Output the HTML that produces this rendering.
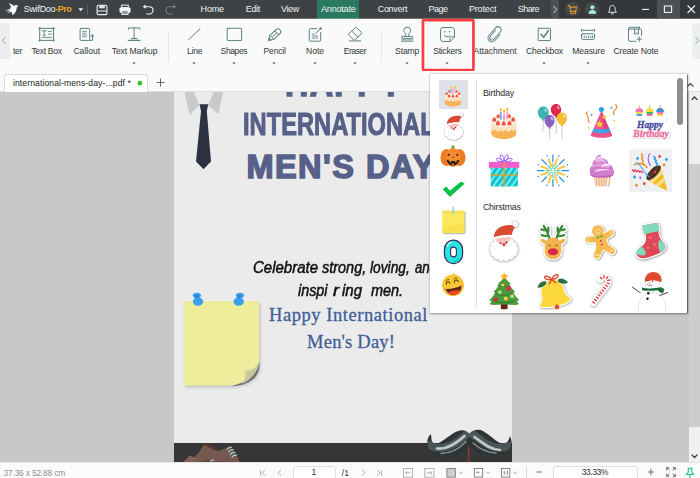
<!DOCTYPE html>
<html lang="en"><head><meta charset="utf-8"><title>SwifDoo PDF - Stickers</title>
<style>
html,body{margin:0;padding:0;background:#fff}
#app{position:relative;width:700px;height:478px;overflow:hidden;background:#fafafa;font-family:"Liberation Sans",sans-serif}
.t{position:absolute;white-space:pre;line-height:1}
.a{position:absolute}
svg{position:absolute;overflow:visible}
.ri{fill:none;stroke:#5d8283;stroke-width:1;stroke-linecap:round;stroke-linejoin:round}
</style></head><body>
<div id="app">

<div class="a" style="left:0;top:92px;width:700px;height:370px;background:#c8c8c8;overflow:hidden">
<div class="a" style="left:174px;top:0;width:338px;height:371px;background:#ebebeb"></div>
<svg style="left:0;top:-92px" width="700" height="478" viewBox="0 0 700 478"><polygon points="184.200,91 193.200,91 199.500,104.900 189.700,114.900" fill="#c9c9c9"/><polygon points="214.200,91 223.200,91 218.300,114.300 207.900,104.900" fill="#c9c9c9"/><path d="M199.600 104.200H208.200L206.800 111.200L211 161.400L203.500 169.200L196 161.400L201 111.200Z" fill="#2d3142"/></svg>
<span class="t" style="left:284.60px;top:-28.07px;font-size:38px;color:#566089;transform-origin:0 0;transform:scaleX(0.8517);font-weight:bold;letter-spacing:1.5px;-webkit-text-stroke:1.6px #566089;">HAPPY</span>
<span class="t" style="left:242.60px;top:16.72px;font-size:31.4px;color:#566089;transform-origin:0 0;transform:scaleX(0.7543);font-weight:bold;-webkit-text-stroke:1px #566089;">INTERNATIONAL</span>
<span class="t" style="left:246.40px;top:58.64px;font-size:32.5px;color:#566089;font-weight:bold;letter-spacing:1.478px;-webkit-text-stroke:1.5px #566089;">MEN&#x27;S DAY</span>
<span class="t" style="left:253.10px;top:167.86px;font-size:16px;color:#111;transform-origin:0 0;transform:scaleX(0.9369);font-style:italic;-webkit-text-stroke:0.5px #111;">Celebrate</span>
<span class="t" style="left:321.50px;top:167.86px;font-size:16px;color:#111;transform-origin:0 0;transform:scaleX(0.9035);font-style:italic;-webkit-text-stroke:0.5px #111;">strong,</span>
<span class="t" style="left:369.60px;top:167.86px;font-size:16px;color:#111;transform-origin:0 0;transform:scaleX(0.8605);font-style:italic;-webkit-text-stroke:0.5px #111;">loving,</span>
<span class="t" style="left:414.60px;top:167.86px;font-size:16px;color:#111;transform-origin:0 0;transform:scaleX(0.8201);font-style:italic;-webkit-text-stroke:0.5px #111;">and</span>
<span class="t" style="left:297.60px;top:191.06px;font-size:16px;color:#111;transform-origin:0 0;transform:scaleX(0.8965);font-style:italic;-webkit-text-stroke:0.5px #111;">inspi</span>
<span class="t" style="left:332.60px;top:191.06px;font-size:16px;color:#111;transform-origin:0 0;transform:scaleX(1.1449);font-style:italic;-webkit-text-stroke:0.5px #111;">r</span>
<span class="t" style="left:341.80px;top:191.06px;font-size:16px;color:#111;transform-origin:0 0;transform:scaleX(0.9410);font-style:italic;-webkit-text-stroke:0.5px #111;">ing</span>
<span class="t" style="left:370.90px;top:191.06px;font-size:16px;color:#111;transform-origin:0 0;transform:scaleX(0.9022);font-style:italic;-webkit-text-stroke:0.5px #111;">men.</span>
<span class="t" style="left:269.10px;top:213.98px;font-size:18.5px;color:#3f5f99;font-family:'Liberation Serif', serif;letter-spacing:0.549px;-webkit-text-stroke:0.3px #3f5f99;">Happy International</span>
<span class="t" style="left:307.10px;top:240.58px;font-size:18.5px;color:#3f5f99;font-family:'Liberation Serif', serif;letter-spacing:0.194px;-webkit-text-stroke:0.3px #3f5f99;">Men&#x27;s Day!</span>
<svg style="left:0;top:-92px" width="700" height="478" viewBox="0 0 700 478"><defs><linearGradient id="curl" x1="0" y1="0" x2="1" y2="1"><stop offset="0" stop-color="#dcdba6"/><stop offset="1" stop-color="#b4b49a"/></linearGradient><filter id="nsh" x="-10%" y="-10%" width="125%" height="125%"><feGaussianBlur stdDeviation="1.6"/></filter></defs><path d="M185 303.500H260.500V366C260 378 250 387 233 387.500H185Z" fill="#000" opacity=".16" filter="url(#nsh)"/><path d="M258.900 361C262 374 252 386 231 386.300C245 383 255 376 258.900 361Z" fill="#5e5e5e" opacity=".85"/><path d="M183.700 301.100H258.900V362C258.500 372 250 382 231 385.500H183.700Z" fill="#eeed9b"/><path d="M258.900 362C256.500 368 250.500 371.300 244.500 370.300C246.500 375 246 380 240.500 384.200C250 381 257 374 258.900 362Z" fill="url(#curl)"/><g fill="#3b9ff0"><ellipse cx="196.900" cy="295.300" rx="4.100" ry="2.600"/><path d="M195 295h4l.8 4h-5.200z" fill="#2f86d6"/><ellipse cx="198" cy="301.600" rx="5.200" ry="4.200"/><ellipse cx="240" cy="295.300" rx="4.100" ry="2.600"/><path d="M237.700 295h4l-.3 4h-5.200z" fill="#2f86d6"/><ellipse cx="238.700" cy="301.600" rx="5.200" ry="4.200"/></g></svg>
<div class="a" style="left:174px;top:350.7px;width:338px;height:30px;background:#363636"></div>
<svg style="left:0;top:-92px" width="700" height="478" viewBox="0 0 700 478"><path d="M183.500 462L189.400 455.600L194.500 457.200L199 452.500L203 462Z" fill="#7d6158"/><path d="M195.500 462L198.800 452.500L204.300 444.300C210 446.500 214 450 218 451C222 451 225 447.300 228.500 447C233.500 449 238 456 239.500 462Z" fill="#75594f"/><path d="M204.300 444.300L206.800 443.200C212 446 216.500 449 221 450.300L218 451.300C213 450.500 208 447.200 204.300 444.300Z" fill="#583630"/><path d="M200 462c3-1.500 8-2.500 14-1.500l20 1.500z" fill="#63463e"/><path d="M227.200 449.500c1-1.800 2.800-2.600 4.400-2.200M228.600 452c1-1.800 2.900-2.600 4.700-2.200M230.200 454.600c1-1.800 3-2.600 4.900-2.100M232 457.300c1-1.700 2.800-2.500 4.700-2" stroke="#9fcfd6" stroke-width="1.150" fill="none" stroke-linecap="round"/><path d="M210.500 462c.3-1.600 2-2.400 3.800-1.600" stroke="#9fcfd6" stroke-width="1.100" fill="none"/><rect x="467.900" y="445" width="1.500" height="17" fill="#8a3b2b"/><path id="mst" d="M469.300 433.800C466 430 462 429.500 458 431C450 434 443 442 437 443.500C433 444.500 431 441 431.500 437L430.700 434.300C427.500 437 426 443 428.500 448C432 455.500 442 458.500 450 457.300C458 456 465 451.500 469 445.700C473 451 481 455.500 490 455.700C499 456 507 453 510.500 447C512.500 443 511.500 438.500 509.700 436C509.500 440 507 443.500 503 443.500C497 443 490 435 483 431C479 428.800 473 429.500 469.300 433.800Z" fill="#2c3434"/><defs><filter id="mb" x="-10%" y="-30%" width="120%" height="160%"><feGaussianBlur stdDeviation="0.600"/></filter><clipPath id="mcl"><use href="#mst"/></clipPath></defs><g clip-path="url(#mcl)" filter="url(#mb)" fill="none" stroke-linecap="round"><path d="M430 445C440 452 455 446 467 434" stroke="#566262" stroke-width="8" opacity=".75"/><path d="M472 434C482 440 492 452 508 446" stroke="#566262" stroke-width="8" opacity=".75"/><path d="M437 448.500C447 450 456 443.500 464.500 436" stroke="#c6cfcf" stroke-width="2.700" opacity=".95"/><path d="M441 453.500C450 453.500 459 449 466 441.500" stroke="#93a0a0" stroke-width="1.600" opacity=".85"/><path d="M474.500 437C481 441.500 489 449.500 500 450" stroke="#c6cfcf" stroke-width="2.700" opacity=".95"/><path d="M473 443C479 448.500 487 452.500 496 453" stroke="#93a0a0" stroke-width="1.600" opacity=".85"/></g></svg>
</div>
<div class="a" style="left:0;top:0;width:700px;height:18px;background:#3e4245"></div>
<div class="a" style="left:0;top:18px;width:700px;height:1px;background:#6c6f72"></div>
<div class="a" style="left:317px;top:0;width:42px;height:18px;background:#2a7a62"></div>
<div class="a" style="left:317px;top:18px;width:42px;height:1px;background:#5f9a88"></div>
<div class="a" style="left:559px;top:0;width:141px;height:18px;background:#35383b"></div>
<div class="a" style="left:559px;top:18px;width:141px;height:1px;background:#65686a"></div>
<div class="a" style="left:551px;top:0;width:8px;height:18px;background:#4e5255"></div>
<div class="a" style="left:657.4px;top:0;width:22.6px;height:18px;background:#4c5053"></div>
<svg style="left:0px;top:0px" width="30" height="19" viewBox="0 0 30 19"><defs><linearGradient id="bg" x1="4" y1="0" x2="11" y2="0" gradientUnits="userSpaceOnUse"><stop offset="0" stop-color="#fff" stop-opacity=".15"/><stop offset="1" stop-color="#fff"/></linearGradient></defs><path d="M8.6 3.200C10.600 3.300 12.600 4.500 13.700 6.100C14.700 5.100 16.200 4.800 17.300 5.300L18.100 6.500L16.900 6.900C16.700 9.200 15.900 11.600 14.600 13.200C13.800 14.200 12.900 14.900 11.900 15.100C12.400 13.700 12.200 12.500 11.600 11.700C10.400 12.400 8.400 12.900 5.100 12.800C7.400 12.300 9 11.700 10 10.900C8.500 11 6.500 10.900 4.300 10.400C7 10 9.200 9.300 10.600 8.300C11.200 6.500 10.400 4.600 8.600 3.200Z" fill="url(#bg)"/></svg>
<svg style="left:78px;top:8px" width="6" height="4" viewBox="0 0 6 4"><path d="M0.3 0.3h5L2.8 3.3z" fill="#f0f0f0"/></svg>
<div class="a" style="left:87px;top:5px;width:1px;height:9.5px;background:#5c6063"></div>
<svg style="left:96px;top:4px" width="12" height="12" viewBox="0 0 12 12"><rect x="1.1" y="1.3" width="9.8" height="9.3" rx="1.3" fill="none" stroke="#f4f4f4" stroke-width="1.1"/><rect x="3.2" y="1.4" width="5.6" height="2.9" fill="#f4f4f4" opacity=".9"/><path d="M1.2 7h9.6" stroke="#f4f4f4" stroke-width="1"/></svg>
<svg style="left:119px;top:4px" width="12" height="12" viewBox="0 0 12 12"><rect x="2.7" y="1.1" width="6.6" height="2.6" fill="none" stroke="#f4f4f4" stroke-width="1"/><rect x="0.5" y="3.6" width="11" height="5.2" rx="1" fill="#f4f4f4"/><rect x="2.9" y="6.6" width="6.2" height="3.9" fill="#8f9395" stroke="#f4f4f4" stroke-width="0.9"/></svg>
<svg style="left:142px;top:3px" width="13" height="13" viewBox="0 0 13 13"><path d="M2.6 3.7H7.4A3.65 3.65 0 0 1 7.4 11H4.2" fill="none" stroke="#f4f4f4" stroke-width="1.15"/><path d="M0.7 3.7L3.6 1.6V5.800z" fill="#f4f4f4"/></svg>
<svg style="left:164px;top:3px" width="13" height="13" viewBox="0 0 13 13"><path d="M10.4 3.7H5.600A3.65 3.65 0 0 0 5.600 11H8.800" fill="none" stroke="#777b7e" stroke-width="1.15"/><path d="M12.3 3.7L9.4 1.6V5.800z" fill="#777b7e"/></svg>
<svg style="left:552px;top:5px" width="6" height="9" viewBox="0 0 6 9"><path d="M1.5 1L4.800 4.500L1.5 8" fill="none" stroke="#d8d8d8" stroke-width="1"/></svg>
<div class="a" style="left:565px;top:1.6px;width:14.8px;height:14.8px;border-radius:50%;background:#46494c"></div>
<svg style="left:565px;top:2px" width="15" height="15" viewBox="0 0 15 15"><path d="M2.8 3.600h1.7l1.2 5.800h5.000l.8-4.300H5.300" fill="none" stroke="#dc9a22" stroke-width="1.1" stroke-linejoin="round"/><path d="M5.800 9.400v2.200M10.400 9.400v2.200M5.800 11.600h4.600" fill="none" stroke="#dc9a22" stroke-width="1"/></svg>
<div class="a" style="left:584.6px;top:1.6px;width:14.8px;height:14.8px;border-radius:50%;background:#46494c"></div>
<svg style="left:584.6px;top:1.6px" width="15" height="15" viewBox="0 0 15 15"><circle cx="7.4" cy="5.300" r="2.100" fill="#a9eddb"/><path d="M3.600 11.800c0-2.500 1.600-3.700 3.800-3.700s3.800 1.200 3.800 3.700z" fill="#a9eddb"/></svg>
<svg style="left:606px;top:3px" width="13" height="13" viewBox="0 0 13 13"><path d="M2.300 9.300c1-.9 1.300-2 1.300-3.600 0-1.900 1.100-3.200 2.800-3.200s2.800 1.300 2.800 3.200c0 1.600.3 2.700 1.300 3.600z" fill="none" stroke="#e6e6e6" stroke-width="1"/><path d="M5.300 10.900h2.200" stroke="#e6e6e6" stroke-width="1.1"/></svg>
<svg style="left:641px;top:5px" width="10" height="9" viewBox="0 0 10 9"><path d="M1 4.400h7" stroke="#f4f4f4" stroke-width="1.1"/></svg>
<svg style="left:663px;top:4px" width="10" height="10" viewBox="0 0 10 10"><rect x="1.400" y="2" width="7.200" height="6.400" fill="none" stroke="#f4f4f4" stroke-width="1.1"/></svg>
<svg style="left:686px;top:4px" width="11" height="11" viewBox="0 0 11 11"><path d="M1.600 1.500L9 9M9 1.500L1.600 9" stroke="#f4f4f4" stroke-width="1.1" fill="none"/></svg>
<span class="t" style="left:23.80px;top:5.23px;font-size:9px;color:#f2f2f2;letter-spacing:-0.288px;">SwifDoo</span>
<span class="t" style="left:55.30px;top:5.23px;font-size:9px;color:#eaa327;font-weight:bold;letter-spacing:-0.475px;">-Pro</span>
<span class="t" style="left:200.60px;top:4.68px;font-size:9px;color:#f2f2f2;letter-spacing:-0.204px;">Home</span>
<span class="t" style="left:245.70px;top:4.68px;font-size:9px;color:#f2f2f2;letter-spacing:-0.304px;">Edit</span>
<span class="t" style="left:280.90px;top:4.68px;font-size:9px;color:#f2f2f2;letter-spacing:-0.340px;">View</span>
<span class="t" style="left:321.00px;top:4.68px;font-size:9px;color:#f2f2f2;letter-spacing:-0.191px;">Annotate</span>
<span class="t" style="left:377.70px;top:4.68px;font-size:9px;color:#f2f2f2;letter-spacing:-0.288px;">Convert</span>
<span class="t" style="left:428.60px;top:4.68px;font-size:9px;color:#f2f2f2;letter-spacing:-0.533px;">Page</span>
<span class="t" style="left:468.90px;top:4.68px;font-size:9px;color:#f2f2f2;letter-spacing:-0.145px;">Protect</span>
<span class="t" style="left:517.80px;top:4.68px;font-size:9px;color:#f2f2f2;letter-spacing:-0.586px;">Share</span>
<div class="a" style="left:0;top:19px;width:700px;height:52px;background:#fafafa"></div>
<div class="a" style="left:0;top:23px;width:10px;height:36px;background:#eceeef;border-radius:0 2px 2px 0"></div>
<div class="a" style="left:691.5px;top:23px;width:9px;height:36px;background:#eceeef;border-radius:2px 0 0 2px"></div>
<div class="a" style="left:168px;top:32px;width:1px;height:30px;background:#e3e5e6"></div>
<div class="a" style="left:381px;top:32px;width:1px;height:30px;background:#e3e5e6"></div>
<svg style="left:1px;top:36px" width="6" height="9" viewBox="0 0 6 9"><path d="M4.500 1L1.300 4.500L4.500 8" fill="none" stroke="#8aa3a3" stroke-width="1"/></svg>
<svg style="left:694px;top:36px" width="6" height="9" viewBox="0 0 6 9"><path d="M1.500 1L4.700 4.500L1.500 8" fill="none" stroke="#8aa3a3" stroke-width="1"/></svg>
<svg class="ri" style="left:30px;top:20px" width="70" height="30" viewBox="30 20 70 30"><rect x="39.700" y="28.400" width="13.800" height="12" rx="0.600"/><g fill="#5d8283" stroke="none"><circle cx="39.700" cy="28.400" r="1.150"/><circle cx="53.500" cy="28.400" r="1.150"/><circle cx="39.700" cy="40.400" r="1.150"/><circle cx="53.500" cy="40.400" r="1.150"/></g><path d="M42.100 30.800h4.200M44.200 30.800v4.400M43.100 35.200h2.300M48.300 31.400h3.200M48.300 34.100h3.200M42.100 37.400h9.400" stroke-width="0.900"/><rect x="80.100" y="28.400" width="9.600" height="12" rx="0.900"/><path d="M82.400 31.400h4M82.400 33.200h4M82.400 35h4M82.400 36.800h4" stroke-width="0.800"/><path d="M89.700 40.400h2.800v-5"/><path d="M91.300 36l1.200-1.700l1.200 1.700z" fill="#5d8283" stroke-width="0.600"/></svg>
<svg class="ri" style="left:120px;top:20px" width="30" height="30" viewBox="120 20 30 30"><path d="M128.500 29.400V27.900H139.700V29.400M134.100 27.900V38.500M131.400 38.500h5.500"/><path d="M128.300 40.400H139.800" stroke-width="1.250"/></svg>
<svg class="ri" style="left:187px;top:27px" width="15" height="15" viewBox="0 0 15 15"><path d="M1.500 12.700L13 1.900"/></svg>
<svg class="ri" style="left:226px;top:27px" width="17" height="15" viewBox="0 0 17 15"><rect x="1.200" y="1.300" width="14.400" height="12.300" rx="0.5"/></svg>
<svg class="ri" style="left:260px;top:20px" width="30" height="30" viewBox="260 20 30 30"><g transform="translate(268.400 40.500) rotate(-43)"><path d="M0.300 0L4.300 -2.800H13A2.800 2.800 0 0 1 13 2.800H4.300Z"/><path d="M11.300 -2.800V2.800M6 0H11.300" stroke-width="0.900"/><path d="M4.300 -2.800C5.300 -1 5.300 1 4.300 2.800" stroke-width="0.900"/><path d="M0.200 0L2.300 -1.500V1.500Z" fill="#5d8283" stroke-width="0.500"/></g></svg>
<svg class="ri" style="left:300px;top:20px" width="70" height="30" viewBox="300 20 70 30"><path d="M316.800 28.600H310.200A0.900 0.900 0 0 0 309.300 29.500V40.300A0.900 0.900 0 0 0 310.200 41.200H319.800A0.900 0.900 0 0 0 320.700 40.300V32.400"/><path d="M312.200 34.100h2.600M312.200 36.100h5.400M312.200 38.100h5.400" stroke-width="0.850"/><path d="M315.900 33.200L320.200 28.900"/><circle cx="320.600" cy="28.600" r="1.250" fill="#5d8283" stroke="none"/><path d="M355.300 27.700a1 1 0 0 1 1.400 0L361.300 32.300a1 1 0 0 1 0 1.400L355.200 39.800a1 1 0 0 1-1.400 0L348.700 35.200a1 1 0 0 1 0-1.400Z"/><path d="M351.900 31.200L357.900 37.100M349.300 40.900H360.600"/></svg>
<svg class="ri" style="left:395px;top:20px" width="30" height="30" viewBox="395 20 30 30"><path d="M405.700 36.200V33.700C404.500 32.700 403.900 31.700 403.900 30.500A3.350 3.350 0 0 1 410.600 30.500C410.600 31.700 410 32.700 408.800 33.700V36.200"/><rect x="401.700" y="36.400" width="11.100" height="2" rx="0.500"/><path d="M401.500 39.900H413M401.500 41.300H413" stroke-width="0.850"/></svg>
<svg class="ri" style="left:439px;top:26px" width="17" height="17" viewBox="0 0 17 17"><path d="M10.800 15.500H4.200A2.700 2.700 0 0 1 1.500 12.800V4.200A2.700 2.700 0 0 1 4.200 1.500H12.800A2.700 2.700 0 0 1 15.500 4.200V10.800Z"/><path d="M10.800 15.500V12.400A1.600 1.600 0 0 1 12.400 10.800H15.500"/><path d="M5.300 9.400C6.800 11 9.400 11.200 11 9.800"/><circle cx="6" cy="5.800" r="0.800" fill="#5d8283" stroke="none"/><circle cx="10.600" cy="5.800" r="0.800" fill="#5d8283" stroke="none"/></svg>
<svg class="ri" style="left:486px;top:26px" width="17" height="18" viewBox="0 0 17 18"><g transform="rotate(42 8.500 9)"><path d="M6.200 5.500V13.200A2.300 2.300 0 0 0 10.800 13.200V3.400A3.100 3.100 0 0 0 4.600 3.400V13.400A3.900 3.900 0 0 0 12.400 13.400V5.500" transform="translate(0 -0.500)"/></g></svg>
<svg class="ri" style="left:537px;top:27px" width="15" height="15" viewBox="0 0 15 15"><rect x="1.200" y="1.300" width="12.300" height="12.300" rx="0.600"/><path d="M4 7.300L6.600 10.200L11.300 3.800" stroke-width="1.500"/></svg>
<svg class="ri" style="left:580px;top:28px" width="16" height="13" viewBox="0 0 16 13"><path d="M1.600 1.300V3.300M14.400 1.300V3.300M1.600 2.300H14.400"/><rect x="1.500" y="5.800" width="13" height="5.600" rx="1"/><path d="M4.200 8V9.600M6.400 8.600V9.600M8.600 8V9.600M10.800 8.600V9.600M12.600 8V9.600"/></svg>
<svg class="ri" style="left:620px;top:20px" width="30" height="30" viewBox="620 20 30 30"><path d="M639.300 27.300H630A1.500 1.500 0 0 0 628.500 28.800V39.800A1.500 1.500 0 0 0 630 41.300H635.800"/><path d="M628.700 29.100H640.400A1.200 1.200 0 0 1 641.600 30.300V35.500M639.300 27.300V29"/><path d="M634.600 29.200V34.400L636.450 33L638.300 34.400V29.200"/><path d="M637 39.100H641.600M639.300 36.800V41.400"/></svg>
<span class="t" style="left:12.90px;top:47.32px;font-size:8.6px;color:#33373a;letter-spacing:-0.310px;">ter</span>
<span class="t" style="left:31.40px;top:47.32px;font-size:8.6px;color:#33373a;letter-spacing:-0.334px;">Text Box</span>
<span class="t" style="left:73.40px;top:47.32px;font-size:8.6px;color:#33373a;letter-spacing:0.019px;">Callout</span>
<span class="t" style="left:111.70px;top:47.32px;font-size:8.6px;color:#33373a;letter-spacing:-0.092px;">Text Markup</span>
<span class="t" style="left:187.00px;top:47.32px;font-size:8.6px;color:#33373a;letter-spacing:-0.212px;">Line</span>
<span class="t" style="left:220.60px;top:47.32px;font-size:8.6px;color:#33373a;letter-spacing:-0.426px;">Shapes</span>
<span class="t" style="left:263.50px;top:47.32px;font-size:8.6px;color:#33373a;letter-spacing:-0.184px;">Pencil</span>
<span class="t" style="left:306.00px;top:47.32px;font-size:8.6px;color:#33373a;letter-spacing:-0.039px;">Note</span>
<span class="t" style="left:343.70px;top:47.32px;font-size:8.6px;color:#33373a;letter-spacing:-0.502px;">Eraser</span>
<span class="t" style="left:395.10px;top:47.32px;font-size:8.6px;color:#33373a;letter-spacing:-0.169px;">Stamp</span>
<span class="t" style="left:433.20px;top:47.32px;font-size:8.6px;color:#33373a;letter-spacing:-0.283px;">Stickers</span>
<span class="t" style="left:473.50px;top:47.32px;font-size:8.6px;color:#33373a;letter-spacing:-0.037px;">Attachment</span>
<span class="t" style="left:526.00px;top:47.32px;font-size:8.6px;color:#33373a;letter-spacing:-0.165px;">Checkbox</span>
<span class="t" style="left:572.30px;top:47.32px;font-size:8.6px;color:#33373a;letter-spacing:-0.120px;">Measure</span>
<span class="t" style="left:613.40px;top:47.32px;font-size:8.6px;color:#33373a;letter-spacing:-0.122px;">Create Note</span>
<svg style="left:132.0px;top:61.8px" width="4" height="3" viewBox="0 0 4 3"><path d="M0.350 0.400h3.300L2 2.350z" fill="#4a4e51"/></svg>
<svg style="left:192.0px;top:61.8px" width="4" height="3" viewBox="0 0 4 3"><path d="M0.350 0.400h3.300L2 2.350z" fill="#4a4e51"/></svg>
<svg style="left:232.3px;top:61.8px" width="4" height="3" viewBox="0 0 4 3"><path d="M0.350 0.400h3.300L2 2.350z" fill="#4a4e51"/></svg>
<svg style="left:272.3px;top:61.8px" width="4" height="3" viewBox="0 0 4 3"><path d="M0.350 0.400h3.300L2 2.350z" fill="#4a4e51"/></svg>
<svg style="left:313.0px;top:61.8px" width="4" height="3" viewBox="0 0 4 3"><path d="M0.350 0.400h3.300L2 2.350z" fill="#4a4e51"/></svg>
<svg style="left:352.9px;top:61.8px" width="4" height="3" viewBox="0 0 4 3"><path d="M0.350 0.400h3.300L2 2.350z" fill="#4a4e51"/></svg>
<svg style="left:405.0px;top:61.8px" width="4" height="3" viewBox="0 0 4 3"><path d="M0.350 0.400h3.300L2 2.350z" fill="#4a4e51"/></svg>
<svg style="left:445.4px;top:61.8px" width="4" height="3" viewBox="0 0 4 3"><path d="M0.350 0.400h3.300L2 2.350z" fill="#4a4e51"/></svg>
<svg style="left:542.0px;top:61.8px" width="4" height="3" viewBox="0 0 4 3"><path d="M0.350 0.400h3.300L2 2.350z" fill="#4a4e51"/></svg>
<svg style="left:585.7px;top:61.8px" width="4" height="3" viewBox="0 0 4 3"><path d="M0.350 0.400h3.300L2 2.350z" fill="#4a4e51"/></svg>
<svg style="left:0;top:0" width="700" height="80" viewBox="0 0 700 80"><rect x="422.950" y="20.050" width="50.500" height="50" rx="0.800" fill="#fcfcfc" fill-opacity="0" stroke="#f73e42" stroke-width="2.700"/></svg>
<div class="a" style="left:0;top:71px;width:700px;height:20px;background:#fafafa"></div>
<div class="a" style="left:0;top:91px;width:700px;height:1px;background:#dcdedf"></div>
<div class="a" style="left:4.3px;top:74px;width:143.6px;height:18px;background:#fff;border:1px solid #d9dcde;border-bottom:none;border-radius:3px 3px 0 0;box-sizing:border-box"></div>
<span class="t" style="left:13.00px;top:78.52px;font-size:8.6px;color:#222;letter-spacing:0.093px;">international-mens-day-...pdf *</span>
<svg style="left:136px;top:79px" width="8" height="8" viewBox="0 0 8 8"><circle cx="3.900" cy="4.200" r="2.350" fill="#34c724"/></svg>
<svg style="left:156px;top:78px" width="9" height="9" viewBox="0 0 9 9"><path d="M4.5 0.5v8M0.5 4.5h8" stroke="#555" stroke-width="0.9" fill="none"/></svg>
<svg style="left:686px;top:82px" width="9" height="6" viewBox="0 0 9 6"><path d="M1.300 4.700L4.400 1.600L7.500 4.700" stroke="#3c3c3c" stroke-width="1.150" fill="none"/></svg>
<div class="a" style="left:688.5px;top:92px;width:11.5px;height:370px;background:#f0f0f0"></div>
<div class="a" style="left:688.5px;top:164px;width:11.5px;height:263px;background:#cdcdcd"></div>
<svg style="left:690px;top:95px" width="9" height="6" viewBox="0 0 9 6"><path d="M1.600 4.900L4.500 2L7.400 4.900" stroke="#333" stroke-width="1.250" fill="none"/></svg>
<svg style="left:690px;top:453px" width="9" height="6" viewBox="0 0 9 6"><path d="M1.600 1.600L4.500 4.500L7.400 1.600" stroke="#333" stroke-width="1.250" fill="none"/></svg>
<div class="a" style="left:430px;top:74.4px;width:257px;height:239px;background:#fff;box-shadow:0.5px 0.8px 2.2px rgba(0,0,0,.42);border-radius:1px"></div>
<div class="a" style="left:686.6px;top:75px;width:1px;height:238px;background:rgba(70,70,70,.55)"></div>
<div class="a" style="left:439px;top:80.4px;width:28.6px;height:28.2px;background:#dfe3e7"></div>
<div class="a" style="left:476.4px;top:80px;width:1px;height:227px;background:#dcdfe1"></div>
<div class="a" style="left:677.2px;top:78.2px;width:5.8px;height:46.5px;border-radius:3px;background:#8e8e8e"></div>
<span class="t" style="left:482.90px;top:88.65px;font-size:8.8px;color:#2b2b2b;letter-spacing:-0.148px;">Birthday</span>
<span class="t" style="left:482.90px;top:203.25px;font-size:8.8px;color:#2b2b2b;letter-spacing:-0.199px;">Chirstmas</span>
<svg style="left:0;top:0" width="700" height="478" viewBox="0 0 700 478">
<defs><filter id="sblur" x="-20%" y="-20%" width="140%" height="140%"><feGaussianBlur stdDeviation="0.800"/></filter><clipPath id="pclip"><rect x="430" y="75" width="257" height="235.300"/></clipPath></defs>
<g clip-path="url(#pclip)">
<rect x="629" y="149.300" width="43" height="42.600" fill="#eef0f2"/>
<g transform="translate(453 96.2) scale(0.66)">
<ellipse cx="0" cy="10" rx="12.400" ry="5.800" fill="#f6b257"/>
<path d="M-12.400 4V10H12.400V4Z" fill="#f6b257"/>
<path d="M-12.600 -2V5C-11 8 -9.500 8 -8.500 5.500C-7 9 -4.500 9 -3.500 6C-2 9 1 9 2 6C3.500 9 6.500 9 7.500 5.500C8.500 8 11 8 12.600 5V-2Z" fill="#fbe2c0"/>
<ellipse cx="0" cy="-2" rx="12.600" ry="5.600" fill="#fdeedb"/>
<g fill="#f0524b"><path d="M-9.500 -6.500c1.600 1.200 2.200 3 1.600 4.400h-3.400c-.6-1.600 0-3.300 1.800-4.400z"/><path d="M9.500 -6.500c1.600 1.200 2.200 3 1.600 4.400h-3.400c-.6-1.600 0-3.300 1.800-4.400z"/>
<path d="M-5.600 -9.500c1.400 1 1.900 2.600 1.400 3.800h-3c-.5-1.400 0-2.800 1.600-3.800z"/><path d="M5.600 -9.500c1.400 1 1.900 2.600 1.400 3.800h-3c-.5-1.400 0-2.800 1.600-3.800z"/>
<path d="M-5.800 -3c1.700 1.300 2.300 3.200 1.700 4.700h-3.600c-.6-1.700 0-3.500 1.900-4.700z"/><path d="M0 -2.600c1.700 1.300 2.300 3.200 1.700 4.700h-3.600c-.6-1.700 0-3.500 1.900-4.700z"/><path d="M5.800 -3c1.700 1.300 2.300 3.200 1.700 4.700h-3.600c-.6-1.700 0-3.500 1.900-4.700z"/></g>
<rect x="-3.900" y="-11.500" width="1.700" height="7.500" fill="#6ea6e6"/><rect x="-0.600" y="-10" width="1.700" height="7" fill="#ef8fc4"/><rect x="2.500" y="-12" width="1.700" height="7.500" fill="#f3a0c8"/>
<g fill="#fbc02d"><path d="M-3 -16c1.300 1.500 1.600 3 0 4.500c-1.600-1.500-1.300-3 0-4.500z"/><path d="M.3 -14.800c1.300 1.500 1.600 3 0 4.500c-1.600-1.500-1.300-3 0-4.500z"/><path d="M3.400 -16.500c1.300 1.500 1.600 3 0 4.500c-1.600-1.500-1.300-3 0-4.500z"/></g>
</g>
<g transform="translate(453.5 126.5) scale(0.68)">
<g fill="#000" stroke="#000" stroke-width="1.200" opacity=".32" transform="translate(.2 .4)" filter="url(#sblur)"><ellipse cx="0.3" cy="8.3" rx="11.799999999999999" ry="9.6"/><circle cx="11.50" cy="8.30" r="3"/><circle cx="10.39" cy="12.20" r="3"/><circle cx="7.28" cy="15.34" r="3"/><circle cx="2.79" cy="17.07" r="3"/><circle cx="-2.19" cy="17.07" r="3"/><circle cx="-6.68" cy="15.34" r="3"/><circle cx="-9.79" cy="12.20" r="3"/><circle cx="-10.90" cy="8.30" r="3"/><circle cx="-9.79" cy="4.40" r="3"/><circle cx="-6.68" cy="1.26" r="3"/><circle cx="-2.19" cy="-0.47" r="3"/><circle cx="2.79" cy="-0.47" r="3"/><circle cx="7.28" cy="1.26" r="3"/><circle cx="10.39" cy="4.40" r="3"/><circle cx="11.700" cy="-16.800" r="2.700"/></g>
<g fill="#fff"><ellipse cx="0.3" cy="8.3" rx="11.799999999999999" ry="9.6"/><circle cx="11.50" cy="8.30" r="3"/><circle cx="10.39" cy="12.20" r="3"/><circle cx="7.28" cy="15.34" r="3"/><circle cx="2.79" cy="17.07" r="3"/><circle cx="-2.19" cy="17.07" r="3"/><circle cx="-6.68" cy="15.34" r="3"/><circle cx="-9.79" cy="12.20" r="3"/><circle cx="-10.90" cy="8.30" r="3"/><circle cx="-9.79" cy="4.40" r="3"/><circle cx="-6.68" cy="1.26" r="3"/><circle cx="-2.19" cy="-0.47" r="3"/><circle cx="2.79" cy="-0.47" r="3"/><circle cx="7.28" cy="1.26" r="3"/><circle cx="10.39" cy="4.40" r="3"/></g>
<path d="M-8 -2.300C-5 -3.400 3 -4.800 7.800 -4.400C7.200 -2 6 0.500 4 2.800L0.500 4.500L-3.500 3.500C-5.500 2.500 -7.200 0 -8 -2.300Z" fill="#f9c4bd"/>
<path d="M-9.700 -3.200C-9.600 -9 -6 -13.500 -0.500 -15C3.500 -16 7.500 -16.300 10.300 -15.200L11.500 -14C10 -12 8.800 -9 8.300 -5.300C2.500 -5.800 -4 -5 -9.700 -3.200Z" fill="#d84a32"/>
<path d="M-10.300 -3.400C-4 -5.800 3 -6.500 8.700 -6L8.500 -3.700C3 -4.300 -4 -3.500 -9.800 -1.200Z" fill="#fff"/>
<circle cx="11.700" cy="-16.800" r="2.600" fill="#fff"/>
<circle cx="-3" cy="2.200" r="0.800" fill="#1c1c1c"/><circle cx="2.900" cy="1.400" r="0.800" fill="#1c1c1c"/>
<circle cx="0.500" cy="3.800" r="1.700" fill="#e0453a"/>
<path d="M-9 1.500C-6 1.500 -2 3 -0.500 5.200H1.500C3 2.800 6 1 9 0.500C8 5 3.500 7 0.500 6C-2.500 7.500 -7.500 6 -9 1.500Z" fill="#fff"/>
</g>
<g transform="translate(453 157)">
<rect x="-1.300" y="-11.500" width="2.600" height="4.500" rx="0.800" fill="#5aa02c"/>
<ellipse cx="-6.500" cy="0.500" rx="6" ry="8.600" fill="#ee7a22"/><ellipse cx="6.500" cy="0.500" rx="6" ry="8.600" fill="#ee7a22"/>
<ellipse cx="0" cy="0.500" rx="7.500" ry="9.600" fill="#f58a2e"/>
<path d="M-5.800 -1.500l1.500-2.200l1.500 2.200z M2.800 -1.500l1.500-2.200l1.500 2.200z M-0.800 1l.8-1.200l.8 1.200z" fill="#2a1c14"/>
<path d="M-6.500 2.500c2 1 4 1.500 6.500 1.500s4.500-.5 6.500-1.500c-.5 3.500-3 6-6.500 6s-6-2.500-6.500-6z M-3.500 3.600v1.600h1.600V3.900z M2 3.900v1.400h1.600V3.600z M-1 8v-1.400h1.800V8z" fill="#2a1c14" fill-rule="evenodd"/>
</g>
<g transform="translate(453.5 188.8)">
<path d="M-11.500 0.500L-7.500 -3.500L-3.500 1L8 -8.500L12 -5L-3.500 9Z" fill="#000" opacity=".12" transform="translate(.6 .8)"/>
<path d="M-11.500 0.500L-7.500 -3.500L-3.500 1L8 -8.500L12 -5L-3.500 9Z" fill="#0dc04b" stroke="#fff" stroke-width="1.200" stroke-linejoin="round"/>
</g>
<g transform="translate(453.2 221.7)">
<path d="M-10.500 -10.800H11.800V9.500L10.500 11.800H-10.500Z" fill="#000" opacity=".25" transform="translate(.7 .8)"/>
<path d="M-11 -11.300H11.300V9L9.800 11.300H-11Z" fill="#fbe85c"/>
<path d="M-11 6L11.300 2V9L9.800 11.300H-11Z" fill="#f7de4a" opacity=".7"/>
<path d="M-10.500 -9.700H11" stroke="#b9a93a" stroke-width="0.600" stroke-dasharray="0.800 0.800"/>
<rect x="-0.800" y="-14.800" width="1.800" height="6.500" fill="#9fd2ee"/>
</g>
<g transform="translate(453.5 251.8)">
<rect x="-9.100" y="-11.600" width="18.200" height="23.400" rx="8.800" ry="9.500" fill="#22e6df" stroke="#3c2c5c" stroke-width="1.200"/>
<rect x="-2.900" y="-4.700" width="5.800" height="9.800" rx="2.800" fill="#fff" stroke="#3c2c5c" stroke-width="1.100"/>
<path d="M-6 -5.500C-5.500 -8 -4 -9.300 -2 -9.600" stroke="#c8fbfb" stroke-width="1.300" fill="none" stroke-linecap="round"/>
<path d="M5.500 6.500C4.500 8.500 3 9.500 1 9.800" stroke="#12b8c0" stroke-width="1.200" fill="none" stroke-linecap="round"/>
</g>
<g transform="translate(453 285)">
<circle cx="0" cy="0.300" r="10.800" fill="#f7b52a"/><circle cx="0" cy="-0.600" r="10" fill="#fcc934"/>
<path d="M-0.500 -10.500c.4-1.600 2.400-1.500 2.600.2z" fill="#f9bd2c"/>
<g transform="rotate(-12)">
<path d="M-6.600 -1.800c.3-3.300 3.700-3.300 4.100-.2M1.800 -1.800c.3-3.300 3.700-3.300 4.100-.2" stroke="#5a3a10" stroke-width="1" fill="none" stroke-linecap="round"/>
<path d="M-6.300 -5.500c1-1 2.500-1.200 3.600-.5M2 -5.800c1-.8 2.500-.8 3.600 0" stroke="#5a3a10" stroke-width="0.800" fill="none" stroke-linecap="round"/>
<path d="M-8 2.300C-3 3.600 3 3.600 8 2.300C7.600 7 4 9.800 0 9.800C-4 9.800 -7.600 7 -8 2.300Z" fill="#5a2a16"/>
<path d="M-6.200 6.300C-3 5.300 2 5.300 5.800 6.800C4.500 8.700 2.300 9.800 0 9.800C-2.600 9.800 -4.900 8.500 -6.200 6.300Z" fill="#ee452c"/>
<circle cx="-9" cy="2.500" r="1.300" fill="#f59a3a" opacity=".7"/><circle cx="9" cy="2.500" r="1.300" fill="#f59a3a" opacity=".7"/>
</g>
</g>
<g transform="translate(503.8 123.5) scale(1.0)">
<ellipse cx="0" cy="10" rx="12.400" ry="5.800" fill="#f6b257"/>
<path d="M-12.400 4V10H12.400V4Z" fill="#f6b257"/>
<path d="M-12.600 -2V5C-11 8 -9.500 8 -8.500 5.500C-7 9 -4.500 9 -3.500 6C-2 9 1 9 2 6C3.500 9 6.500 9 7.500 5.500C8.500 8 11 8 12.600 5V-2Z" fill="#fbe2c0"/>
<ellipse cx="0" cy="-2" rx="12.600" ry="5.600" fill="#fdeedb"/>
<g fill="#f0524b"><path d="M-9.500 -6.500c1.600 1.200 2.200 3 1.600 4.400h-3.400c-.6-1.600 0-3.300 1.800-4.400z"/><path d="M9.500 -6.500c1.600 1.200 2.200 3 1.600 4.400h-3.400c-.6-1.600 0-3.300 1.800-4.400z"/>
<path d="M-5.600 -9.500c1.400 1 1.900 2.600 1.400 3.800h-3c-.5-1.400 0-2.800 1.600-3.800z"/><path d="M5.600 -9.500c1.400 1 1.900 2.600 1.400 3.800h-3c-.5-1.400 0-2.800 1.600-3.800z"/>
<path d="M-5.800 -3c1.700 1.300 2.300 3.200 1.700 4.700h-3.600c-.6-1.700 0-3.500 1.900-4.700z"/><path d="M0 -2.600c1.700 1.300 2.300 3.200 1.700 4.700h-3.600c-.6-1.700 0-3.500 1.900-4.700z"/><path d="M5.800 -3c1.700 1.300 2.300 3.200 1.700 4.700h-3.600c-.6-1.700 0-3.500 1.900-4.700z"/></g>
<rect x="-3.900" y="-11.500" width="1.700" height="7.500" fill="#6ea6e6"/><rect x="-0.600" y="-10" width="1.700" height="7" fill="#ef8fc4"/><rect x="2.500" y="-12" width="1.700" height="7.500" fill="#f3a0c8"/>
<g fill="#fbc02d"><path d="M-3 -16c1.300 1.500 1.600 3 0 4.500c-1.600-1.500-1.300-3 0-4.500z"/><path d="M.3 -14.800c1.300 1.500 1.600 3 0 4.500c-1.600-1.500-1.300-3 0-4.500z"/><path d="M3.400 -16.500c1.300 1.500 1.600 3 0 4.500c-1.600-1.500-1.300-3 0-4.500z"/></g>
</g>
<g>
<g stroke="#b7b2cf" stroke-width="0.700" fill="none"><path d="M543.300 119.500c-1 3 .8 5-.2 8s.3 3 0 4.500"/><path d="M556 116.200c1 4-.8 6 .2 9.500s-.5 5 0 8"/><path d="M549.600 127.200c1 3-.8 5 0 8s-.3 2.500 0 4"/><path d="M561.900 124.800c.8 3-.6 5.500 0 8.500s-.3 3.500 0 5.500"/></g>
<path d="M543.300 106.600c3.200 0 5.400 2.700 5.400 6s-2.700 6.300-4.700 6.800l.5 1h-2.400l.5-1c-2-.5-4.700-3.500-4.700-6.800s2.200-6 5.400-6z" fill="#3cb4ae"/>
<path d="M556 104c3.100 0 5.200 2.600 5.200 5.800s-2.600 6.100-4.500 6.600l.5 1h-2.400l.5-1c-1.900-.5-4.500-3.400-4.500-6.600s2.100-5.800 5.200-5.800z" fill="#e02a4d"/>
<path d="M561.900 112.600c3 0 5 2.600 5 5.800s-2.500 6.100-4.300 6.600l.5 1h-2.400l.5-1c-1.800-.5-4.300-3.400-4.300-6.600s2-5.800 5-5.800z" fill="#f5bc2f"/>
<path d="M549.600 115c3 0 5 2.600 5 5.800s-2.500 6.100-4.300 6.600l.5 1h-2.400l.5-1c-1.800-.5-4.300-3.400-4.300-6.600s2-5.800 5-5.800z" fill="#8a64c1"/>
<g fill="#fff" opacity=".55"><ellipse cx="545.600" cy="110.300" rx="1" ry="1.800" transform="rotate(-30 545.600 110.300)"/><ellipse cx="558.200" cy="107.600" rx="1" ry="1.800" transform="rotate(-30 558.200 107.600)"/><ellipse cx="551.800" cy="118.600" rx="1" ry="1.800" transform="rotate(-30 551.800 118.600)"/><ellipse cx="564" cy="116.200" rx="1" ry="1.800" transform="rotate(-30 564 116.200)"/></g>
</g>
<g>
<path d="M601.400 110.500L590.700 135.500C594 138 608 138.500 612.100 135.500Z" fill="#f0528e"/>
<path d="M601.400 110.500L604.500 137.300C608 137.200 610.500 136.600 612.100 135.500Z" fill="#d9407c"/>
<path d="M592.600 131L590.700 135.500C594 138 608 138.500 612.100 135.500L610.200 131C606 133 597 133 592.600 131Z" fill="#f0528e"/>
<path d="M593.800 128.200L592.500 131.500C596 133.800 606.500 133.800 610.400 131.500L609 128.200C605 130 598 130 593.800 128.200Z" fill="#39a5ea"/>
<path d="M599.600 120.500l1.200 2.300 2.600.3-1.900 1.800.5 2.600-2.400-1.300-2.300 1.300.4-2.600-1.900-1.800 2.600-.3z" fill="#f8c738"/>
<path d="M604.300 114.600l.8 1.500 1.700.2-1.200 1.200.4 1.700-1.700-.9-1.400.9.100-1.700-1.200-1.200 1.700-.2z" fill="#f8c738"/>
<circle cx="601.400" cy="109.600" r="2.500" fill="#2b9df0"/>
<g fill="none" stroke="#f58a2c" stroke-width="1.250" stroke-linecap="round"><path d="M587 111.800c-2 2.200 1.800 4 1.200 6.400s.2 3.200 1 4.200"/><path d="M615.600 104.600c2 1.800 1.200 3.600-.4 5s-2.200 3.200-1 5"/></g>
<circle cx="591.500" cy="114.800" r="1" fill="#39a5ea"/><circle cx="611.500" cy="107.800" r="1" fill="#39a5ea"/>
<circle cx="588.600" cy="128" r="0.900" fill="#f8c738"/><circle cx="614.300" cy="120.800" r="0.900" fill="#f8c738"/>
</g>
<g><path d="M634 116c0-6 3-10.500 6-10.500h19c4 0 6 4 6.200 9l1.600 3.600-1.600 3.800c3.500 2 5.600 6 5.300 11-.3 4-2 5.600-5 5.300h-30c-3.500.3-5.300-2-5-6 .3-4 2-7 3.500-8.500z" fill="#000" opacity=".13" transform="translate(.7 .8)"/><path d="M634 116c0-6 3-10.500 6-10.500h19c4 0 6 4 6.200 9l1.600 3.600-1.600 3.800c3.500 2 5.600 6 5.300 11-.3 4-2 5.600-5 5.300h-30c-3.500.3-5.300-2-5-6 .3-4 2-7 3.500-8.500z" fill="#fff"/><rect x="638.9499999999999" y="105.3" width="0.700" height="3" fill="#f39a3a"/><path d="M635.4 112.1c0-2.600 1.500-4 3.900-4s3.900 1.400 3.900 4z" fill="#f376ae"/><path d="M635.9 112.1h6.800l-.5 2h-5.800z" fill="#f6d540"/><path d="M636.4 114.1h5.800l-.4 1.800h-5z" fill="#4aa0de"/><rect x="649.35" y="105.3" width="0.700" height="3" fill="#8bc34a"/><path d="M645.8000000000001 112.1c0-2.600 1.500-4 3.900-4s3.900 1.400 3.900 4z" fill="#f5dc3c"/><path d="M646.3000000000001 112.1h6.800l-.5 2h-5.800z" fill="#4caf50"/><path d="M646.8000000000001 114.1h5.800l-.4 1.800h-5z" fill="#ef6b9f"/><rect x="659.75" y="105.3" width="0.700" height="3" fill="#f0524b"/><path d="M656.2 112.1c0-2.600 1.500-4 3.900-4s3.900 1.400 3.900 4z" fill="#3f8fd0"/><path d="M656.7 112.1h6.800l-.5 2h-5.800z" fill="#f376ae"/><path d="M657.2 114.1h5.800l-.4 1.800h-5z" fill="#f6d540"/><text x="650" y="127.600" text-anchor="middle" font-family="&quot;Liberation Serif&quot;,serif" font-style="italic" font-weight="bold" font-size="10.500" fill="#474c9f" stroke="#474c9f" stroke-width="0.350" textLength="26" lengthAdjust="spacingAndGlyphs">Happy</text><text x="651" y="137" text-anchor="middle" font-family="&quot;Liberation Serif&quot;,serif" font-style="italic" font-weight="bold" font-size="10.500" fill="#ea6f9c" stroke="#ea6f9c" stroke-width="0.350" textLength="36" lengthAdjust="spacingAndGlyphs">Birthday</text></g>
<g>
<defs><pattern id="gst" width="5" height="5" patternUnits="userSpaceOnUse" patternTransform="rotate(35)"><rect width="5" height="5" fill="#10c2cf"/><rect width="1.800" height="5" fill="#7ef0f2"/></pattern></defs>
<rect x="490.700" y="167.500" width="27.200" height="19" fill="url(#gst)"/>
<rect x="488.900" y="161.900" width="30.400" height="6" fill="#f05fc9"/>
<rect x="503.400" y="161.900" width="1.500" height="24.600" fill="#dfa125"/><rect x="490.700" y="174.400" width="27.200" height="1.300" fill="#dfa125"/>
<g fill="none" stroke="#9b5cf0" stroke-width="1"><path d="M504 161.500c-2.500-1-4.500-3.500-3.500-6.500 2-1 3.500 2.500 3.500 6.500z"/><path d="M504.300 161.500c2.500-1 4.500-3.500 3.500-6.500-2-1-3.500 2.500-3.500 6.500z"/><path d="M503 161.200c-2.500.8-6 .5-7-2 1.500-2 5-.5 7 2z"/><path d="M505.300 161.200c2.500.8 6 .5 7-2-1.500-2-5-.5-7 2z"/></g>
</g>
<g stroke-linecap="round"><path d="M551.19 166.00L548.62 158.95" stroke="#f6c132" stroke-width="1.700"/><path d="M554.61 166.00L557.18 158.95" stroke="#f6c132" stroke-width="1.700"/><path d="M557.60 168.99L564.65 166.42" stroke="#f6c132" stroke-width="1.700"/><path d="M557.60 172.41L564.65 174.98" stroke="#f6c132" stroke-width="1.700"/><path d="M554.61 175.40L557.18 182.45" stroke="#f6c132" stroke-width="1.700"/><path d="M551.19 175.40L548.62 182.45" stroke="#f6c132" stroke-width="1.700"/><path d="M548.20 172.41L541.15 174.98" stroke="#f6c132" stroke-width="1.700"/><path d="M548.20 168.99L541.15 166.42" stroke="#f6c132" stroke-width="1.700"/><path d="M552.90 161.70L552.90 155.20" stroke="#2b90e2" stroke-width="1.250"/><path d="M552.90 168.70L552.90 163.70" stroke="#62d0b8" stroke-width="1.200"/><path d="M559.26 164.34L563.86 159.74" stroke="#2b90e2" stroke-width="1.250"/><path d="M554.31 169.29L557.85 165.75" stroke="#62d0b8" stroke-width="1.200"/><path d="M561.90 170.70L568.40 170.70" stroke="#2b90e2" stroke-width="1.250"/><path d="M554.90 170.70L559.90 170.70" stroke="#62d0b8" stroke-width="1.200"/><path d="M559.26 177.06L563.86 181.66" stroke="#2b90e2" stroke-width="1.250"/><path d="M554.31 172.11L557.85 175.65" stroke="#62d0b8" stroke-width="1.200"/><path d="M552.90 179.70L552.90 186.20" stroke="#2b90e2" stroke-width="1.250"/><path d="M552.90 172.70L552.90 177.70" stroke="#62d0b8" stroke-width="1.200"/><path d="M546.54 177.06L541.94 181.66" stroke="#2b90e2" stroke-width="1.250"/><path d="M551.49 172.11L547.95 175.65" stroke="#62d0b8" stroke-width="1.200"/><path d="M543.90 170.70L537.40 170.70" stroke="#2b90e2" stroke-width="1.250"/><path d="M550.90 170.70L545.90 170.70" stroke="#62d0b8" stroke-width="1.200"/><path d="M546.54 164.34L541.94 159.74" stroke="#2b90e2" stroke-width="1.250"/><path d="M551.49 169.29L547.95 165.75" stroke="#62d0b8" stroke-width="1.200"/><circle cx="546.98" cy="156.05" r="0.800" fill="#2b90e2"/><circle cx="558.82" cy="156.05" r="0.800" fill="#2b90e2"/><circle cx="567.55" cy="164.78" r="0.800" fill="#2b90e2"/><circle cx="567.55" cy="176.62" r="0.800" fill="#2b90e2"/><circle cx="558.82" cy="185.35" r="0.800" fill="#2b90e2"/><circle cx="546.98" cy="185.35" r="0.800" fill="#2b90e2"/><circle cx="538.25" cy="176.62" r="0.800" fill="#2b90e2"/><circle cx="538.25" cy="164.78" r="0.800" fill="#2b90e2"/><circle cx="552.9" cy="170.7" r="1.500" fill="#e8faf5"/></g>
<g>
<path d="M592.800 174.500H611.800L609.300 186.600H595.300Z" fill="#fcdcc0"/>
<path d="M596 175.500l.9 10.500M598.800 175.500l.6 10.500M601.600 175.500v10.500M604.400 175.500l-.3 10.500M607.200 175.500l-.7 10.500M609.700 175.500l-1.100 10.500" stroke="#e3925c" stroke-width="0.700" fill="none"/>
<path d="M608.300 178l-1 7.500" stroke="#fff" stroke-width="1.300"/>
<path d="M590 172.500c-1-3.500.5-6 2.800-7-.8-3 .8-5.500 3.200-6.300-.3-2.500 2-4.500 5.500-4.500-1.800 1.600-.8 3 1.200 3.600 3.800 1 6 3 5.600 6 3 .6 5.200 2.800 4.800 5.400 2 1.600 1.400 4.600-1 6-3 1.800-17.500 2.200-20.500.4-1.500-1-1.900-2.200-1.600-3.600z" fill="#d07dcf"/>
<path d="M593 165.500c2.500-2 8-2.800 12.500-1 2 1 3 2.500 2.800 4-4-2.500-11-2.800-15.800-.8-.3-.8 0-1.600.5-2.200z" fill="#e3a0e0"/>
<path d="M596 159.200c2-1.600 5.500-1.600 7.500 0 1.500 1 2.300 2.300 2.200 3.700-3-1.500-7-1.600-10-.2-.3-1.300-.3-2.500.3-3.500z" fill="#ebb4e8"/>
<path d="M597.500 157.500c1.600-1.300 3.800-1.300 5 .2-2-.3-3.800.3-5.300 1.800zM604.500 163.500c2.600-.2 4.800.8 5.800 3-3-1-6.600-.8-9 .6zM595.500 170.500c4.500-2 11.500-2 16 .2-4.800-.8-11.500-.6-16.500 1.400z" fill="#fbe6f8"/>
<path d="M590.300 174.200c2 2.400 20.400 2.400 23.400 0-1.500 2.800-3.700 3.300-11.700 3.300s-10.200-.5-11.700-3.300z" fill="#bb62ba"/>
<circle cx="598.500" cy="163" r="0.500" fill="#f6cf3c"/><circle cx="606" cy="160.500" r="0.500" fill="#5bc0f0"/><circle cx="602.500" cy="167.500" r="0.500" fill="#f6cf3c"/><circle cx="594.500" cy="169" r="0.500" fill="#5bc0f0"/>
</g>
<g>
<g transform="translate(653.600 172.700) rotate(44)">
<path d="M0 -9.300C6 -6.500 17 0 22 3.200C17 5.500 5 9 0 9.300Z" fill="#f6b91f"/>
<path d="M3.500 -7.400l3.600 2L6.600 7.900l-3.600.8zM10.500 -3.400l3.400 2.100L13 6.300l-3.400 1z" fill="#fbe08c"/>
<ellipse cx="0" cy="0" rx="4" ry="9.600" fill="#4b3021"/>
<path d="M-1.500 -6c1.500 2 2 6 .5 10" stroke="#6d4a30" stroke-width="1" fill="none"/>
<circle cx="0.500" cy="-1.500" r="1.200" fill="#e83a5a"/>
</g>
<g fill="none" stroke-width="1.200" stroke-linecap="round" stroke-linejoin="round">
<path d="M641.300 153.600l1.600 1.600-1.800 1.200 2 1.500-1.600 1.400 2 1.600-1.200 1.400 1.400 1.400" stroke="#f58a2c"/>
<path d="M634.500 164.600c4.500-1.800 9.500-.8 12.500 2.800" stroke="#f58a2c" stroke-width="1.500"/>
<path d="M649.800 153.600c-2.200 3.400-2.400 7.400.6 12" stroke="#9b6cf0"/>
<path d="M653.600 156.400l2 1.400-1.400 1.400 2.200 1.400-1.200 1.500 2.200 1.300-.8 1.400 1.300 1" stroke="#2b9df0" stroke-width="1.300"/>
<path d="M636.600 162.800c3.400 1.400 5.400 5 7.400 8.600s3.400 4.400 5.400 5.400" stroke="#45a6e8" stroke-width="1.100"/>
<path d="M632.400 169.800l1.500 1.700 1.300-1.500 1.500 1.800 1.400-1.400 1.500 1.900 1.400-1.200 1.200 1.600" stroke="#e83a5a" stroke-width="1.300"/>
</g>
<g>
<path d="M637.500 156.500l1.700 1.900-1.700 1.900-1.700-1.900z" fill="#2b9df0"/><path d="M659.600 154.600l1.700 1.800-1.700 1.800-1.700-1.800z" fill="#e83a5a"/>
<path d="M666.500 157.600l1.700 1.900-1.700 1.900-1.700-1.900z" fill="#2b9df0"/><path d="M664 163l1.700 1.900-1.700 1.900-1.700-1.900z" fill="#f58a2c"/>
<path d="M634.500 175.100l1.700 1.900-1.700 1.900-1.700-1.900z" fill="#2b9df0"/><path d="M640.300 176.100l1.400 1.700-1.400 1.700-1.400-1.700z" fill="#9b6cf0"/>
<path d="M636.500 183.400l1.700 1.900-1.700 1.900-1.700-1.900z" fill="#f58a2c"/><path d="M644.300 181.800l1.700 1.900-1.700 1.900-1.700-1.900z" fill="#e83a5a"/>
</g>
</g>
<g transform="translate(503.5 241) scale(1.0)">
<g fill="#000" stroke="#000" stroke-width="1.200" opacity=".32" transform="translate(.2 .4)" filter="url(#sblur)"><ellipse cx="0.3" cy="8.3" rx="11.799999999999999" ry="9.6"/><circle cx="11.50" cy="8.30" r="3"/><circle cx="10.39" cy="12.20" r="3"/><circle cx="7.28" cy="15.34" r="3"/><circle cx="2.79" cy="17.07" r="3"/><circle cx="-2.19" cy="17.07" r="3"/><circle cx="-6.68" cy="15.34" r="3"/><circle cx="-9.79" cy="12.20" r="3"/><circle cx="-10.90" cy="8.30" r="3"/><circle cx="-9.79" cy="4.40" r="3"/><circle cx="-6.68" cy="1.26" r="3"/><circle cx="-2.19" cy="-0.47" r="3"/><circle cx="2.79" cy="-0.47" r="3"/><circle cx="7.28" cy="1.26" r="3"/><circle cx="10.39" cy="4.40" r="3"/><circle cx="11.700" cy="-16.800" r="2.700"/></g>
<g fill="#fff"><ellipse cx="0.3" cy="8.3" rx="11.799999999999999" ry="9.6"/><circle cx="11.50" cy="8.30" r="3"/><circle cx="10.39" cy="12.20" r="3"/><circle cx="7.28" cy="15.34" r="3"/><circle cx="2.79" cy="17.07" r="3"/><circle cx="-2.19" cy="17.07" r="3"/><circle cx="-6.68" cy="15.34" r="3"/><circle cx="-9.79" cy="12.20" r="3"/><circle cx="-10.90" cy="8.30" r="3"/><circle cx="-9.79" cy="4.40" r="3"/><circle cx="-6.68" cy="1.26" r="3"/><circle cx="-2.19" cy="-0.47" r="3"/><circle cx="2.79" cy="-0.47" r="3"/><circle cx="7.28" cy="1.26" r="3"/><circle cx="10.39" cy="4.40" r="3"/></g>
<path d="M-8 -2.300C-5 -3.400 3 -4.800 7.800 -4.400C7.200 -2 6 0.500 4 2.800L0.500 4.500L-3.500 3.500C-5.500 2.500 -7.200 0 -8 -2.300Z" fill="#f9c4bd"/>
<path d="M-9.700 -3.200C-9.600 -9 -6 -13.500 -0.500 -15C3.500 -16 7.500 -16.300 10.300 -15.200L11.500 -14C10 -12 8.800 -9 8.300 -5.300C2.500 -5.800 -4 -5 -9.700 -3.200Z" fill="#d84a32"/>
<path d="M-10.300 -3.400C-4 -5.800 3 -6.500 8.700 -6L8.500 -3.700C3 -4.300 -4 -3.500 -9.800 -1.200Z" fill="#fff"/>
<circle cx="11.700" cy="-16.800" r="2.600" fill="#fff"/>
<circle cx="-3" cy="2.200" r="0.800" fill="#1c1c1c"/><circle cx="2.900" cy="1.400" r="0.800" fill="#1c1c1c"/>
<circle cx="0.500" cy="3.800" r="1.700" fill="#e0453a"/>
<path d="M-9 1.500C-6 1.500 -2 3 -0.500 5.200H1.500C3 2.800 6 1 9 0.500C8 5 3.500 7 0.500 6C-2.500 7.500 -7.500 6 -9 1.500Z" fill="#fff"/>
</g>
<g stroke-linecap="round" stroke-linejoin="round"><g opacity=".38" filter="url(#sblur)" transform="translate(.5 .9)"><path d="M553 237.400C557.600 237.400 560.600 240.500 561.100 245C561.600 249 561.600 253 559.600 255.900C557.900 258.100 555.500 258.900 553 258.900C550.500 258.900 548.100 258.100 546.400 255.900C544.400 253 544.400 249 544.900 245C545.400 240.500 548.400 237.400 553 237.400Z" fill="#000" stroke="#000" stroke-width="3"/><path d="M546.800 241.200C544.600 238.800 541.600 238.100 540.700 239.200C540.400 241.600 543 243.800 545.800 244Z" fill="#000" stroke="#000" stroke-width="3"/><path d="M546.800 241.200C544.600 238.800 541.600 238.100 540.700 239.200C540.400 241.600 543 243.800 545.800 244Z" fill="#000" stroke="#000" stroke-width="3" transform="translate(1106 0) scale(-1 1)"/><path d="M549.600 238.800C548.600 234.500 546.500 230 543.800 226M547.700 233.200C548.400 231.400 548.600 229.400 548.300 227.600M546 230.200C544.500 230.300 542.800 230 541.300 229.400M547.600 235.600C545.600 236 543.500 235.800 541.700 235.200" fill="none" stroke="#000" stroke-width="5.400"/><path d="M549.600 238.800C548.600 234.500 546.500 230 543.800 226M547.700 233.200C548.400 231.400 548.600 229.400 548.300 227.600M546 230.200C544.500 230.300 542.800 230 541.300 229.400M547.600 235.600C545.600 236 543.500 235.800 541.700 235.200" fill="none" stroke="#000" stroke-width="5.400" transform="translate(1106 0) scale(-1 1)"/></g><path d="M553 237.400C557.600 237.400 560.600 240.500 561.100 245C561.600 249 561.600 253 559.600 255.900C557.900 258.100 555.500 258.900 553 258.900C550.500 258.900 548.100 258.100 546.400 255.900C544.400 253 544.400 249 544.900 245C545.400 240.500 548.400 237.400 553 237.400Z" fill="#fff" stroke="#fff" stroke-width="3"/><path d="M546.800 241.200C544.600 238.800 541.600 238.100 540.700 239.200C540.400 241.600 543 243.800 545.800 244Z" fill="#fff" stroke="#fff" stroke-width="3"/><path d="M546.800 241.200C544.600 238.800 541.600 238.100 540.700 239.200C540.400 241.600 543 243.800 545.800 244Z" fill="#fff" stroke="#fff" stroke-width="3" transform="translate(1106 0) scale(-1 1)"/><path d="M549.600 238.800C548.600 234.500 546.500 230 543.800 226M547.700 233.200C548.400 231.400 548.600 229.400 548.300 227.600M546 230.200C544.500 230.300 542.800 230 541.300 229.400M547.600 235.600C545.600 236 543.500 235.800 541.700 235.200" fill="none" stroke="#fff" stroke-width="5.400"/><path d="M549.600 238.800C548.600 234.500 546.500 230 543.800 226M547.700 233.200C548.400 231.400 548.600 229.400 548.300 227.600M546 230.200C544.500 230.300 542.800 230 541.300 229.400M547.600 235.600C545.600 236 543.500 235.800 541.700 235.200" fill="none" stroke="#fff" stroke-width="5.400" transform="translate(1106 0) scale(-1 1)"/><path d="M549.600 238.800C548.600 234.500 546.500 230 543.800 226M547.700 233.200C548.400 231.400 548.600 229.400 548.300 227.600M546 230.200C544.500 230.300 542.800 230 541.300 229.400M547.600 235.600C545.600 236 543.500 235.800 541.700 235.200" fill="none" stroke="#3d8c3c" stroke-width="2.300"/><path d="M549.600 238.800C548.600 234.500 546.500 230 543.800 226M547.700 233.200C548.400 231.400 548.600 229.400 548.300 227.600M546 230.200C544.500 230.300 542.800 230 541.300 229.400M547.600 235.600C545.600 236 543.500 235.800 541.700 235.200" fill="none" stroke="#3d8c3c" stroke-width="2.300" transform="translate(1106 0) scale(-1 1)"/><path d="M546.800 241.200C544.600 238.800 541.600 238.100 540.700 239.200C540.400 241.600 543 243.800 545.800 244Z" fill="#f2b24e"/><path d="M546.800 241.200C544.600 238.800 541.600 238.100 540.700 239.200C540.400 241.600 543 243.800 545.800 244Z" fill="#f2b24e" transform="translate(1106 0) scale(-1 1)"/><path d="M553 237.400C557.600 237.400 560.600 240.500 561.100 245C561.600 249 561.600 253 559.600 255.900C557.900 258.100 555.500 258.900 553 258.900C550.500 258.900 548.100 258.100 546.400 255.900C544.400 253 544.400 249 544.900 245C545.400 240.500 548.400 237.400 553 237.400Z" fill="#f2b24e"/><path d="M546.200 255.600c2.800 3.800 10.800 3.800 13.600 0-1.500 2.400-3.800 3.300-6.800 3.300s-5.300-.9-6.800-3.300z" fill="#e09a36"/><ellipse cx="553" cy="251.700" rx="5.200" ry="3.500" fill="#d9294a"/><path d="M548.300 245.800c.7-1 2-1 2.700 0M555 245.800c.7-1 2-1 2.700 0" stroke="#5b3a16" stroke-width="0.700" fill="none"/></g>
<g transform="translate(600.900 241.400) rotate(-16) scale(0.940)">
<path d="M0 -17.500c3.500 0 6.200 2.700 6.200 6 0 1.800-.8 3.300-2 4.500l7.500-1.500c2-.4 3.500.8 3.800 2.500.3 1.800-.8 3.200-2.500 3.600l-7.300 1.800.8 5.500 4.500 6.500c1 1.600.6 3.500-.9 4.500s-3.400.6-4.500-.8l-5.600-6.500-5.600 6.500c-1.100 1.400-3 1.800-4.500.8s-1.900-2.900-.9-4.500l4.500-6.500.8-5.500-7.300-1.800c-1.700-.4-2.800-1.800-2.500-3.600.3-1.700 1.800-2.900 3.800-2.500l7.500 1.500c-1.200-1.200-2-2.700-2-4.500 0-3.300 2.700-6 6.200-6z" stroke="#000" stroke-width="3" opacity=".32" transform="translate(.7 .7)" stroke-linejoin="round" filter="url(#sblur)"/>
<path d="M0 -17.500c3.500 0 6.200 2.700 6.200 6 0 1.800-.8 3.300-2 4.500l7.500-1.500c2-.4 3.500.8 3.800 2.500.3 1.800-.8 3.200-2.500 3.600l-7.300 1.800.8 5.500 4.500 6.500c1 1.600.6 3.500-.9 4.500s-3.400.6-4.500-.8l-5.600-6.500-5.600 6.500c-1.100 1.400-3 1.800-4.500.8s-1.900-2.900-.9-4.500l4.500-6.500.8-5.500-7.300-1.800c-1.700-.4-2.800-1.800-2.500-3.600.3-1.700 1.800-2.900 3.800-2.500l7.500 1.500c-1.200-1.200-2-2.700-2-4.500 0-3.300 2.700-6 6.200-6z" fill="#fff" stroke="#fff" stroke-width="2.400" stroke-linejoin="round"/>
<path d="M0 -17.500c3.500 0 6.200 2.700 6.200 6 0 1.800-.8 3.300-2 4.500l7.500-1.500c2-.4 3.500.8 3.800 2.500.3 1.800-.8 3.200-2.500 3.600l-7.300 1.800.8 5.500 4.500 6.500c1 1.600.6 3.500-.9 4.500s-3.400.6-4.500-.8l-5.600-6.500-5.600 6.500c-1.100 1.400-3 1.800-4.500.8s-1.900-2.900-.9-4.500l4.500-6.500.8-5.500-7.300-1.800c-1.700-.4-2.800-1.800-2.500-3.600.3-1.700 1.800-2.900 3.800-2.500l7.500 1.500c-1.200-1.200-2-2.700-2-4.500 0-3.300 2.700-6 6.200-6z" fill="#f6b94f"/>
<path d="M-2.800 -12.500c.5-.7 1.400-.7 1.900 0M1 -12.500c.5-.7 1.400-.7 1.900 0M-2.500 -10c1.300 1.600 3.700 1.600 5 0" stroke="#fff" stroke-width="0.700" fill="none" stroke-linecap="round"/>
<path d="M-3 -6.500l3 1.300 3-1.300v3l-3-1.300-3 1.300z" fill="#4caf3a"/>
<circle cx="0" cy="-0.500" r="1.100" fill="#e0384a"/><circle cx="0" cy="3.500" r="1.100" fill="#e0384a"/>
<path d="M-13 -6.500c.6 1.500.6 3.300 0 4.800M13 -6.500c-.6 1.500-.6 3.300 0 4.800M-9.500 12.500c1.500-.3 3 .3 4 1.500M9.500 12.500c-1.500-.3-3 .3-4 1.500" stroke="#fff" stroke-width="0.800" fill="none" stroke-linecap="round" stroke-dasharray="1 .8"/>
</g>
<g>
<path d="M643 225.500l13-2.500c1.200-.2 2 .4 2.300 1.500l1 6.500-1 .4c.5 4.500 2 8.500 5.500 11.500 2 2 2 5 .2 7-3 3-12 6.500-18 8-5 1-9-.5-9.500-4-.5-3 2-5.500 5-7.500 4-2.500 5-6 4.500-10l-1.800-8-.8.200-1-2c-.3-.8.300-1 .6-1.100z" stroke="#000" stroke-width="3" opacity=".36" transform="translate(.5 .9)" stroke-linejoin="round" filter="url(#sblur)"/>
<path d="M643 225.500l13-2.500c1.200-.2 2 .4 2.300 1.500l1 6.500-1 .4c.5 4.500 2 8.500 5.500 11.500 2 2 2 5 .2 7-3 3-12 6.500-18 8-5 1-9-.5-9.500-4-.5-3 2-5.500 5-7.500 4-2.500 5-6 4.500-10l-1.800-8-.8.200-1-2c-.3-.8.300-1 .6-1.100z" fill="#fff" stroke="#fff" stroke-width="2.400" stroke-linejoin="round"/>
<path d="M643 225.500l13-2.500c1.200-.2 2 .4 2.300 1.500l1 6.500-1 .4c.5 4.500 2 8.500 5.500 11.500 2 2 2 5 .2 7-3 3-12 6.500-18 8-5 1-9-.5-9.500-4-.5-3 2-5.500 5-7.500 4-2.500 5-6 4.500-10l-1.800-8-.8.200-1-2c-.3-.8.300-1 .6-1.100z" fill="#e04859"/>
<path d="M642.400 225.600l13.600-2.600c1.200-.2 2 .4 2.300 1.500l1 6.500-15 3.300-1.600-6.600z" fill="#80d9b9"/>
<path d="M636.500 254c-.5-3 2-5.500 5-7.500 2.500 1.500 4.500 4.500 4.200 8.500-4.500 1.200-8.600-.2-9.200-1z" fill="#80d9b9"/>
<path d="M659.500 239.500c1.500 1.500 2.500 2.500 4.300 3.400 2 2 2 5 .2 7-.8.800-2 1.600-3.500 2.400-2.500-3.500-3-9-1-12.800z" fill="#80d9b9"/>
<g stroke="#f2909a" stroke-width="0.600"><path d="M650 236v3M648.700 236.800l2.600 1.400M648.700 238.200l2.600-1.400M654.500 243v3M653.200 243.800l2.600 1.400M653.200 245.200l2.600-1.400M648 246.500v2.400M647 247.100l2 1.200M647 248.300l2-1.200"/></g>
</g>
<g>
<rect x="500.800" y="303" width="6.800" height="6.200" rx="1" fill="#6b2419"/>
<path d="M504.300 277c2 2.500 4 5 6.500 6.500l-1.500.8c1.500 3 3.500 5.500 6 7.500l-1.800.8c1.500 3 3.500 5.500 5.800 7.500-1 .8-2 1-2.500 1 1 1.500 1.800 2.500 2 3.200-3 1.200-8.500.2-14.500.2s-11.500 1-14.500-.2c.2-.7 1-1.700 2-3.200-.5 0-1.500-.2-2.500-1 2.300-2 4.300-4.500 5.800-7.500l-1.800-.8c2.500-2 4.500-4.500 6-7.500l-1.500-.8c2.500-1.500 4.500-4 6.500-6.500z" fill="#4b9a3b"/>
<path d="M497.500 285c3 1.500 8 1.800 12 .5M495 293c5 2.500 12 2.500 17.500.3M492.500 300.500c7 2.800 16 2.800 23 .3" stroke="#3a7d2e" stroke-width="1.100" fill="none"/>
<path d="M504.300 272.300l1.300 2.600 2.800.4-2 2 .5 2.800-2.600-1.400-2.500 1.400.4-2.800-2-2 2.800-.4z" fill="#f8b233"/>
<circle cx="502.700" cy="285" r="1.600" fill="#f6cf3c"/><circle cx="508.700" cy="288.500" r="2.400" fill="#e02a4b"/>
<circle cx="499.800" cy="292.300" r="2" fill="#a8dc8c"/><circle cx="505.800" cy="298.500" r="2" fill="#f6cf3c"/>
<circle cx="512.200" cy="296.300" r="2" fill="#a8dc8c"/><circle cx="495.800" cy="299.600" r="2" fill="#e02a4b"/>
</g>
<g transform="rotate(-9 553.500 291)">
<path d="M553.500 279.500c5-.5 9 3 10 8.500.8 4.500.5 7.500 2 9.500s3.500 2.500 3.500 4.500c-1 2-7 3.800-14.500 4.200s-14.500-.4-16.500-2.200c-.5-2 2-3 3-5.500s0-6 .8-10.500c1-5.500 5-8 11.700-8.500z" stroke="#000" stroke-width="2.600" opacity=".3" transform="translate(.5 .9)" filter="url(#sblur)"/>
<path d="M553.500 279.500c5-.5 9 3 10 8.500.8 4.500.5 7.500 2 9.500s3.500 2.500 3.500 4.500c-1 2-7 3.800-14.500 4.200s-14.500-.4-16.500-2.200c-.5-2 2-3 3-5.500s0-6 .8-10.500c1-5.500 5-8 11.700-8.500z" fill="#fff" stroke="#fff" stroke-width="2"/>
<path d="M553.500 279.500c5-.5 9 3 10 8.500.8 4.500.5 7.500 2 9.500s3.500 2.500 3.500 4.500c-1 2-7 3.800-14.500 4.200s-14.500-.4-16.500-2.200c-.5-2 2-3 3-5.500s0-6 .8-10.500c1-5.500 5-8 11.700-8.500z" fill="#fcd83f"/>
<path d="M547.500 279.800C543.500 278.800 539.500 281 537.800 285.200C541.500 286.800 546 285.600 548.300 282.200Z" fill="#2d6c3d" stroke="#fff" stroke-width="0.700"/><path d="M559.700 279.800C563.700 278.800 567.700 281 569.400 285.200C565.700 286.800 561.200 285.600 558.900 282.200Z" fill="#2d6c3d" stroke="#fff" stroke-width="0.700"/>
<circle cx="554.500" cy="307.400" r="2.200" fill="#e04a30"/><rect x="554.100" y="304" width="0.800" height="2" fill="#e04a30"/>
<g fill="none" stroke="#d94a32" stroke-width="1.400" stroke-linecap="round"><path d="M553.500 279.300c-1.200-2.600-4.200-4.600-6.600-3.800-.8 1.800 2 3.900 6.600 3.800z"/><path d="M553.700 279.300c1.200-2.600 4.200-4.600 6.600-3.800.8 1.800-2 3.900-6.600 3.800z"/><path d="M553.500 279.300l-3 4M553.700 279.300l3.400 4"/></g>
</g>
<g fill="none" stroke-linecap="round">
<path d="M593.200 303L607.200 284.800C609.600 281.600 608.600 277.900 605.500 277.100C603 276.500 600.900 277.900 600.300 280" stroke="#000" stroke-width="6.800" opacity=".3" transform="translate(.4 .8)" filter="url(#sblur)"/>
<path d="M593.200 303L607.200 284.800C609.600 281.600 608.600 277.900 605.500 277.100C603 276.500 600.900 277.900 600.300 280" stroke="#fff" stroke-width="6.200"/>
<path d="M593.200 303L607.200 284.800C609.600 281.600 608.600 277.900 605.500 277.100C603 276.500 600.900 277.900 600.300 280" stroke="#e83a4a" stroke-width="3.300" stroke-dasharray="1.400 1.600" stroke-linecap="butt"/>
</g>
<g>
<path d="M648 293c-6 2-9.500 8-9.500 14v5h27v-5c0-6-3.500-12-9.500-14z" fill="#fff" stroke="#dcdcdc" stroke-width="0.800"/>
<circle cx="652.300" cy="284.500" r="7.300" fill="#fff" stroke="#dcdcdc" stroke-width="0.800"/>
<path d="M644.800 281.800c-.3-5.500 3-9.500 8.500-9.700 5 0 8 3 8.300 7.500l-.3 2.600c-5-2.200-11-2.500-16.500-.4z" fill="#e04a30"/>
<circle cx="661.800" cy="272.600" r="1.800" fill="#fff" stroke="#e2e2e2" stroke-width="0.600"/>
<path d="M642 287.500c5 1.300 12 1.300 19-.2l3.300 1.700-1.200 4.600-3.600-1.600c-1-1.200-1.500-1.700-2.500-1.700-5 .7-10 .7-15 0z" fill="#1d6c3c"/>
<circle cx="648.300" cy="293.300" r="1.200" fill="#111"/><circle cx="647.500" cy="298.700" r="1.200" fill="#111"/>
<circle cx="648" cy="280.600" r="0.600" fill="#111"/><circle cx="652.600" cy="281.600" r="0.600" fill="#111"/>
<path d="M648.800 282.300l2.400.6-2.200 1z" fill="#f0702c"/>
<path d="M647 284.300c1.500 1.200 3.500 1.500 5.500.8" stroke="#111" stroke-width="0.500" fill="none"/>
<path d="M632.400 287.200l8 5.600M659.800 295.600l7.900-3.200" stroke="#6b3a34" stroke-width="1" stroke-linecap="round"/>
</g>
</g></svg>
<div class="a" style="left:0;top:462px;width:700px;height:16px;background:#fbfbfb"></div>
<div class="a" style="left:0;top:462px;width:700px;height:1px;background:#e4e4e4"></div>
<span class="t" style="left:3.50px;top:468.89px;font-size:8.4px;color:#8e9193;letter-spacing:-0.172px;">37.36 x 52.88 cm</span>
<div class="a" style="left:292.6px;top:466px;width:43px;height:14px;background:#fff;border:1px solid #dcdfe1;border-radius:3px;box-sizing:border-box"></div>
<span class="t" style="left:311.60px;top:467.72px;font-size:8.6px;color:#333;">1</span>
<span class="t" style="left:341.70px;top:468.92px;font-size:8.6px;color:#333;letter-spacing:0.064px;">/1</span>
<div class="a" style="left:552.6px;top:466px;width:85px;height:14px;background:#fff;border:1px solid #dcdfe1;border-radius:3px;box-sizing:border-box"></div>
<span class="t" style="left:581.70px;top:467.72px;font-size:8.6px;color:#333;letter-spacing:-0.493px;">33.33%</span>
<div class="a" style="left:526px;top:466px;width:1px;height:12px;background:#dcdfe1"></div>
<svg style="left:255px;top:466px" width="130" height="12" viewBox="255 466 130 12"><g fill="none" stroke="#a9acae" stroke-width="0.950"><path d="M260.700 470V475.600M265.300 470L262.200 472.800L265.300 475.600"/><path d="M281 470L278 472.800L281 475.600"/><path d="M362 470L365 472.800L362 475.600"/><path d="M381.600 470V475.600M377 470L380.100 472.800L377 475.600"/></g></svg>
<svg style="left:400px;top:464px" width="120" height="14" viewBox="400 464 120 14"><g fill="none" stroke="#a9acae" stroke-width="0.900"><rect x="403.500" y="468.500" width="9" height="8.700"/><path d="M410.500 472.800H405.500M407.300 471L405.400 472.800L407.300 474.600"/><rect x="424.800" y="468.500" width="9.200" height="8.700"/><path d="M426.800 472.800H432M430.200 471L432.100 472.800L430.200 474.600"/></g><rect x="446.900" y="468.500" width="8.400" height="8.600" fill="#e4e4e4" stroke="#6f7376" stroke-width="0.850"/><path d="M447.300 471.500L450 468.900M447.300 474.300L452.800 468.900M447.600 476.800L455 469.500M450.500 476.800L455 472.300M453.300 476.800L455 475" stroke="#6f7376" stroke-width="0.550" fill="none"/><rect x="474.300" y="468.500" width="8.400" height="8.600" fill="none" stroke="#6f7376" stroke-width="0.850"/><path d="M476.200 472.300H479.600" stroke="#6f7376" stroke-width="0.850"/><rect x="501.600" y="468.500" width="8.200" height="8.600" fill="none" stroke="#6f7376" stroke-width="0.850"/><path d="M504.200 470.800V474.900M507.500 470.800V474.900" stroke="#6f7376" stroke-width="0.800"/><path d="M505.850 471.800V472.500M505.850 473.400V474.100" stroke="#6f7376" stroke-width="0.700"/></svg>
<svg style="left:457.9px;top:471px" width="6" height="4" viewBox="0 0 6 4"><path d="M1.200 0.700L3 2.500L4.800 0.700" fill="none" stroke="#9b9ea1" stroke-width="0.850"/></svg>
<svg style="left:484.8px;top:471px" width="6" height="4" viewBox="0 0 6 4"><path d="M1.200 0.700L3 2.500L4.800 0.700" fill="none" stroke="#9b9ea1" stroke-width="0.850"/></svg>
<svg style="left:512px;top:471px" width="6" height="4" viewBox="0 0 6 4"><path d="M1.200 0.700L3 2.500L4.800 0.700" fill="none" stroke="#9b9ea1" stroke-width="0.850"/></svg>
<svg style="left:536px;top:469px" width="7" height="7" viewBox="0 0 7 7"><path d="M0.400 3H6" stroke="#6a6a6a" stroke-width="0.950"/></svg>
<svg style="left:647px;top:468px" width="8" height="8" viewBox="0 0 8 8"><path d="M0.800 4H7M3.900 0.900V7.100" stroke="#666" stroke-width="0.950" fill="none"/></svg>
<svg style="left:666.4px;top:467.2px" width="10" height="10" viewBox="0 0 10 10"><path d="M0.700 3.300V0.700H3.300M0.700 0.700L3.400 3.400M9.300 3.300V0.700H6.700M9.300 0.700L6.600 3.400M0.700 6.700V9.300H3.300M0.700 9.300L3.400 6.600M9.300 6.700V9.300H6.700M9.300 9.300L6.600 6.600" fill="none" stroke="#5c5f62" stroke-width="0.900"/></svg>
<svg style="left:685px;top:467px" width="10" height="11" viewBox="0 0 10 11"><path d="M2.600 1.400H7.400M3.300 1.400V5.200L1.200 7.500H8.800L6.700 5.200V1.400M5 7.500V11" fill="none" stroke="#1fc08f" stroke-width="1.100" stroke-linejoin="round"/></svg>
</div>
</body></html>
